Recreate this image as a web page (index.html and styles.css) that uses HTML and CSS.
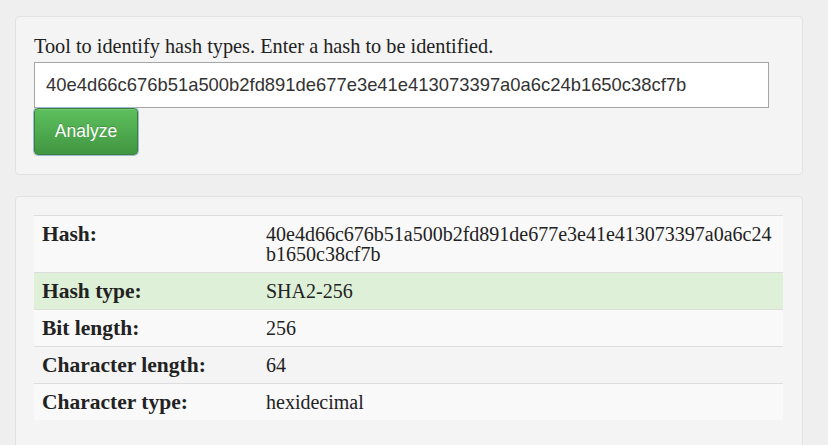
FILE: index.html
```html
<!DOCTYPE html>
<html>
<head>
<meta charset="utf-8">
<link rel="stylesheet" href="styles.css">
</head>
<body>
<div class="page">
  <div class="well">
    <form class="form">
      <label class="intro">Tool to identify hash types. Enter a hash to be identified.</label>
      <input class="hash-input" type="text" value="40e4d66c676b51a500b2fd891de677e3e41e413073397a0a6c24b1650c38cf7b">
      <div><button type="button" class="btn">Analyze</button></div>
    </form>
  </div>
  <div class="well results">
    <table class="table">
      <tr class="odd"><th>Hash:</th><td>40e4d66c676b51a500b2fd891de677e3e41e413073397a0a6c24<br>b1650c38cf7b</td></tr>
      <tr class="success"><th>Hash type:</th><td>SHA2-256</td></tr>
      <tr class="odd"><th>Bit length:</th><td>256</td></tr>
      <tr><th>Character length:</th><td>64</td></tr>
      <tr class="odd"><th>Character type:</th><td>hexidecimal</td></tr>
    </table>
  </div>
</div>
</body>
</html>
```
FILE: styles.css
```css
html, body {
  margin: 0;
  padding: 0;
}
body {
  background: #efefef;
  font-family: "Liberation Serif", "DejaVu Serif", serif;
  color: #222;
  font-size: 18px;
}
.page {
  width: 788px;
  padding: 16px 0 0 15px;
  display: flex;
  flex-direction: column;
  gap: 21px;
}
.well {
  background: #f4f4f4;
  border: 1px solid #e2e2e2;
  border-radius: 4px;
  padding: 19px 18px 19px 18px;
}
.results {
  padding-top: 18px;
  padding-bottom: 40px;
}
.form {
  display: flex;
  flex-direction: column;
}
.intro {
  display: block;
  font-size: 20.3px;
  line-height: 21px;
  margin-bottom: 5px;
  padding-top: 0;
}
.hash-input {
  box-sizing: border-box;
  width: 735px;
  height: 46px;
  margin: 0;
  border: 1px solid #a6a6a6;
  background: #fff;
  padding: 0 11px;
  font-family: "Liberation Sans", Arial, sans-serif;
  font-size: 18.4px;
  color: #333;
  outline: none;
}
.btn {
  box-sizing: border-box;
  width: 104px;
  height: 47px;
  margin: 0;
  border: 1px solid #3d7f3d;
  border-radius: 4px;
  background: linear-gradient(to bottom, #5dc05d 0%, #419641 100%);
  box-shadow: 0 0 0 1px #9dbbd6, inset 0 1px 0 rgba(255,255,255,.15);
  color: #fff;
  font-family: "Liberation Sans", Arial, sans-serif;
  font-size: 17.5px;
  text-shadow: 0 -1px 0 rgba(0,0,0,.2);
  padding: 0;
}
.table {
  width: 749px;
  border-collapse: collapse;
  border-spacing: 0;
}
.table th, .table td {
  border-top: 1px solid #dddddd;
  padding: 8px 8px 8px 8px;
  line-height: 20px;
  vertical-align: top;
  text-align: left;
  font-size: 20px;
}
.table th {
  width: 208px;
  font-weight: bold;
  font-size: 21.5px;
}
.table tr.odd {
  background: #f9f9f9;
}
.table tr.success {
  background: #dff0d8;
}
```
